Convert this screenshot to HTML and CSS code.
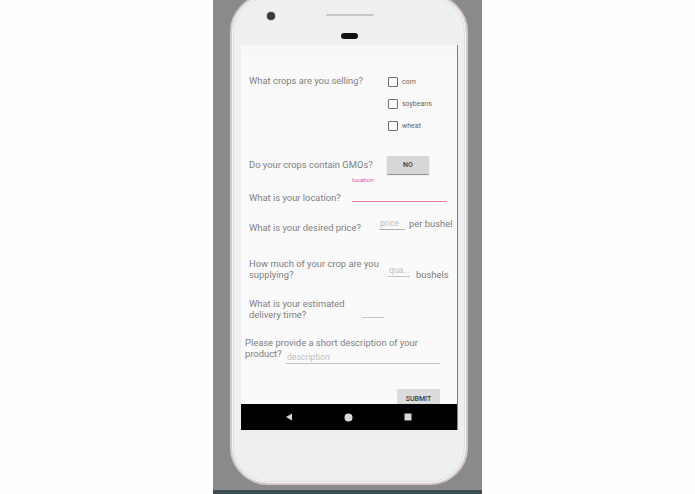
FILE: index.html
```html
<!DOCTYPE html>
<html>
<head>
<meta charset="utf-8">
<link rel="stylesheet" href="styles.css">
</head>
<body>
<div class="stage">
  <div class="phone">
    <div class="bezel-top">
      <div class="hw-row">
        <span class="camera"></span>
        <span class="speaker"></span>
      </div>
      <span class="earpiece"></span>
    </div>
    <div class="screen">
      <div class="statusbar"></div>
      <div class="content">
        <div class="row row-crops">
          <div class="q q-crops">What crops are you selling?</div>
          <div class="checks">
            <label class="check"><span class="box"></span><span>corn</span></label>
            <label class="check"><span class="box"></span><span>soybeans</span></label>
            <label class="check"><span class="box"></span><span>wheat</span></label>
          </div>
        </div>
        <div class="row row-gmo">
          <div class="q q-gmo">Do your crops contain GMOs?</div>
          <button class="btn btn-no">NO</button>
        </div>
        <div class="row row-loc">
          <div class="q q-loc">What is your location?</div>
          <div class="field-loc">
            <div class="float-label">location</div>
            <div class="loc-input"></div>
          </div>
        </div>
        <div class="row row-price">
          <div class="q q-price">What is your desired price?</div>
          <div class="input input-price">price</div>
          <div class="unit unit-price">per bushel</div>
        </div>
        <div class="row row-qty">
          <div class="q q-qty">How much of your crop are you<br>supplying?</div>
          <div class="input input-qty">qua...</div>
          <div class="unit unit-qty">bushels</div>
        </div>
        <div class="row row-del">
          <div class="q q-del">What is your estimated<br>delivery time?</div>
          <div class="input input-del"></div>
        </div>
        <div class="desc">
          <div class="q">Please provide a short description of your</div>
          <div class="desc-line">
            <span class="q">product?</span>
            <div class="input input-desc">description</div>
          </div>
        </div>
        <div class="submit-row">
          <button class="btn btn-submit">SUBMIT</button>
        </div>
      </div>
      <div class="navbar">
        <svg class="nav-ic" width="8" height="8" viewBox="0 0 8 8"><polygon points="7,0.5 7,7.5 1,4" fill="#d8d8d8"/></svg>
        <svg class="nav-ic" width="9" height="9" viewBox="0 0 9 9"><circle cx="4.5" cy="4.5" r="4" fill="#d8d8d8"/></svg>
        <svg class="nav-ic" width="8" height="8" viewBox="0 0 8 8"><rect x="0.5" y="0.5" width="7" height="7" fill="#d8d8d8"/></svg>
      </div>
    </div>
  </div>
</div>
</body>
</html>
```

FILE: styles.css
```css
* { box-sizing: border-box; }
html, body { margin: 0; padding: 0; }
body {
  background: #fdfdfd;
  width: 695px;
  height: 494px;
  overflow: hidden;
  font-family: Roboto, "Liberation Sans", sans-serif;
}
.stage {
  margin-left: 213px;
  width: 269px;
  height: 494px;
  background: #8a8a8a;
  border-bottom: 4px solid #3e4d51;
  overflow: hidden;
}
.phone {
  margin: -6px 0 0 17px;
  width: 238px;
  height: 491px;
  border-radius: 38px;
  background: #eeeff1;
  border: 2px solid #d3c9cd;
  box-shadow: inset 0 0 0 1px #f8f8f9, inset 0 0 0 2px #e2dde0, 0 0 1px #a9a1a4;
}
.bezel-top {
  height: 49px;
  padding-top: 16px;
  display: flex;
  flex-direction: column;
}
.hw-row {
  display: flex;
  align-items: center;
  height: 8px;
}
.camera {
  width: 8px;
  height: 8px;
  margin-left: 35px;
  border-radius: 50%;
  background: #3a3a3c;
  box-shadow: 0 0 0 1px #c9c9cb;
}
.speaker {
  width: 48px;
  height: 2px;
  margin-left: 51px;
  margin-top: -2px;
  border-radius: 1px;
  background: #c8c8ca;
}
.earpiece {
  align-self: center;
  margin-top: 13px;
  margin-left: 1px;
  width: 17px;
  height: 6px;
  border-radius: 3px;
  background: #111;
}
.screen {
  margin-left: 9px;
  width: 217px;
  height: 385px;
  background: #fafafa;
  border-right: 1px solid #7d7d7d;
  display: flex;
  flex-direction: column;
}
.statusbar {
  height: 13px;
  background: #f8f8f8;
  flex: none;
}
.content {
  height: 346px;
  overflow: hidden;
  flex: none;
  color: #7d7d7d;
}
.q {
  font-size: 9.4px;
  line-height: 12px;
  color: #808080;
  white-space: nowrap;
}
.row {
  display: flex;
  padding-left: 8px;
}
.row-crops { margin-top: 13px; align-items: flex-start; }
.q-crops { width: 138px; margin-top: 4px; }
.checks { display: flex; flex-direction: column; padding-left: 1px; }
.check {
  height: 22px;
  display: flex;
  align-items: center;
  font-size: 7px;
  color: #666;
}
.box {
  width: 10px;
  height: 10px;
  border: 1.4px solid #6d6d6d;
  border-radius: 1px;
  margin-right: 4px;
}
.row-gmo { margin-top: 18px; align-items: center; height: 19px; }
.q-gmo { width: 138px; }
.btn {
  font-family: Roboto, "Liberation Sans", sans-serif;
  border: none;
  padding: 0;
  color: #3a3a3a;
  font-weight: 500;
  font-size: 7px;
  background: #d7d7d7;
  border-radius: 1px;
}
.btn-no {
  width: 42px;
  height: 18px;
  box-shadow: 0 1px 1px rgba(0,0,0,0.45);
}
.row-loc { margin-top: 2px; height: 27px; }
.q-loc { width: 103px; align-self: flex-end; margin-bottom: -1px; }
.field-loc { width: 95px; display: flex; flex-direction: column; }
.float-label {
  height: 8px;
  font-size: 6px;
  line-height: 8px;
  color: #e0588a;
}
.loc-input {
  height: 18px;
  border-bottom: 1.5px solid #e9809f;
}
.row-price { margin-top: 12px; height: 18px; align-items: flex-start; }
.q-price { width: 130px; margin-top: 7px; }
.input {
  font-size: 8.6px;
  line-height: 12px;
  color: #bdbdbd;
  border-bottom: 1px solid #b0b0b0;
  white-space: nowrap;
  overflow: hidden;
}
.input-price { width: 26px; margin-top: 2px; padding-left: 1px; }
.unit { font-size: 9.4px; line-height: 12px; color: #7a7a7a; }
.unit-price { margin-left: 4px; margin-top: 3px; }
.row-qty { margin-top: 25px; align-items: flex-start; }
.row-qty .q, .row-del .q { line-height: 11px; }
.q-qty { width: 139px; }
.input-qty { width: 22px; margin-top: 6px; padding-left: 1px; border-bottom-color: #c4c4c4; }
.unit-qty { margin-left: 6px; margin-top: 11px; }
.row-del { margin-top: 17px; align-items: flex-start; }
.q-del { width: 113px; }
.input-del { width: 22px; height: 20px; border-bottom-color: #c8c8c8; }
.desc { margin-top: 17px; padding-left: 4px; }
.desc .q { line-height: 11px; }
.desc-line { display: flex; align-items: flex-start; }
.desc-line .q { width: 41px; }
.input-desc {
  width: 154px;
  margin-top: 3px;
  padding-left: 1px;
  font-size: 8.6px;
  border-bottom-color: #c4c4c4;
}
.submit-row {
  margin-top: 25px;
  display: flex;
  padding-left: 156px;
}
.btn-submit {
  width: 43px;
  height: 22px;
  padding-bottom: 2px;
  font-size: 7px;
  font-weight: 500;
  background: #dcdcdc;
  color: #3d3d3d;
}
.navbar {
  height: 26px;
  background: #000;
  flex: none;
  display: flex;
  align-items: center;
  justify-content: space-between;
  padding: 0 45px 0 44px;
}
.nav-ic { display: block; }
```
